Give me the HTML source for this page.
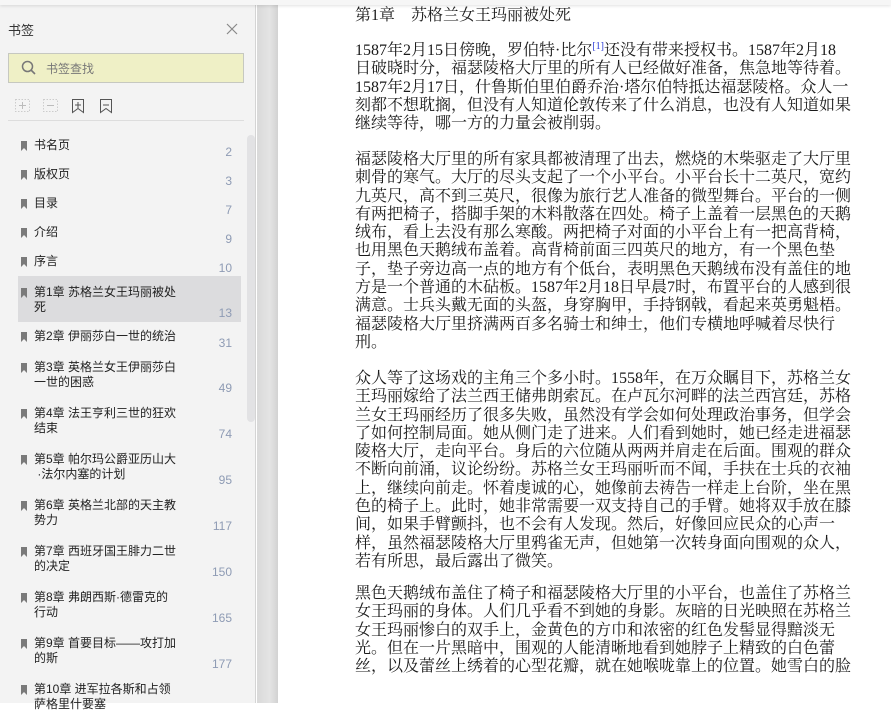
<!DOCTYPE html>
<html><head><meta charset="utf-8"><style>
*{margin:0;padding:0;box-sizing:border-box}
body{width:891px;height:703px;overflow:hidden;background:#fff;position:relative;font-family:"Liberation Sans","Noto Sans CJK SC",sans-serif}
#side{position:absolute;left:0;top:0;width:256px;height:703px;background:#f3f3f3;border-right:1px solid #d4d4d4}
#gap{position:absolute;left:257px;top:0;width:21px;height:703px;background:linear-gradient(90deg,#d9d9d9,#e4e4e4 60%,#d2d2d2)}
#topbar{position:absolute;left:0;top:0;width:891px;height:5px;background:#f6f6f6;box-shadow:0 1px 3px rgba(0,0,0,.12);z-index:5}
.it{position:absolute;left:18px;width:223px;font-size:12px;color:#222;line-height:15px}
.it .t{position:absolute;left:16px;top:0;width:170px;white-space:nowrap}
.it .n{position:absolute;right:9px;color:#8e9bb4;font-size:12px}
.bm{position:absolute;left:3px;top:3px;width:6px;height:10px;background:#7a7a7a;clip-path:polygon(0 0,100% 0,100% 100%,50% 70%,0 100%)}
#page{position:absolute;left:355px;top:0;font-family:"Liberation Serif","Noto Serif CJK SC",serif;font-size:16px;color:#1a1a1a;line-height:18.3px;white-space:nowrap}
.p{position:absolute;left:0}
sup{font-size:10px;color:#2b3bd6;vertical-align:6px;line-height:0}
</style></head><body>
<div id="topbar"></div>
<div id="side">
 <div style="position:absolute;left:8px;top:20px;font-size:13px;color:#333">书签</div>
 <svg style="position:absolute;left:226px;top:23px" width="12" height="12"><path d="M1 1L11 11M11 1L1 11" stroke="#888" stroke-width="1.2"/></svg>
 <div style="position:absolute;left:8px;top:53px;width:236px;height:30px;background:#eff0c6;border:1px solid #c6c8c0"></div>
 <svg style="position:absolute;left:21px;top:60px" width="16" height="16"><circle cx="6.5" cy="6.5" r="5" fill="none" stroke="#777" stroke-width="1.5"/><path d="M10 10L14 14" stroke="#777" stroke-width="1.6"/></svg>
 <div style="position:absolute;left:46px;top:60px;font-size:12px;color:#777">书签查找</div>
 <svg style="position:absolute;left:14px;top:98px" width="110" height="16">
  <rect x="1.5" y="1.5" width="14" height="12" fill="none" stroke="#ccc" stroke-dasharray="1.5 1.5"/><path d="M8.5 4v7M5 7.5h7" stroke="#bbb"/>
  <rect x="29.5" y="1.5" width="14" height="12" fill="none" stroke="#ccc" stroke-dasharray="1.5 1.5"/><path d="M33 7.5h7" stroke="#bbb"/>
  <path d="M58.5 1.5h11v13l-5.5-4-5.5 4z" fill="none" stroke="#555"/><path d="M64 4v6M61 7h6" stroke="#555"/>
  <path d="M86.5 1.5h11v13l-5.5-4-5.5 4z" fill="none" stroke="#555"/><path d="M89 7h6" stroke="#555"/>
 </svg>
 <div style="position:absolute;left:8px;top:120px;width:236px;height:1px;background:#ddd"></div>
 <div style="position:absolute;left:247px;top:135px;width:8px;height:287px;background:#e2e2e4;border-radius:4px"></div>
 <div style="position:absolute;left:18px;top:276px;width:223px;height:46px;background:#dcdcde"></div>

 <div class="it" style="top:138px"><div class="bm"></div><div class="t">书名页</div><div class="n" style="top:7px">2</div></div>
 <div class="it" style="top:167px"><div class="bm"></div><div class="t">版权页</div><div class="n" style="top:7px">3</div></div>
 <div class="it" style="top:196px"><div class="bm"></div><div class="t">目录</div><div class="n" style="top:7px">7</div></div>
 <div class="it" style="top:225px"><div class="bm"></div><div class="t">介绍</div><div class="n" style="top:7px">9</div></div>
 <div class="it" style="top:254px"><div class="bm"></div><div class="t">序言</div><div class="n" style="top:7px">10</div></div>
 <div class="it" style="top:285px"><div class="bm"></div><div class="t">第1章 苏格兰女王玛丽被处<br>死</div><div class="n" style="top:21px">13</div></div>
 <div class="it" style="top:329px"><div class="bm"></div><div class="t">第2章 伊丽莎白一世的统治</div><div class="n" style="top:7px">31</div></div>
 <div class="it" style="top:360px"><div class="bm"></div><div class="t">第3章 英格兰女王伊丽莎白<br>一世的困惑</div><div class="n" style="top:21px">49</div></div>
 <div class="it" style="top:406px"><div class="bm"></div><div class="t">第4章 法王亨利三世的狂欢<br>结束</div><div class="n" style="top:21px">74</div></div>
 <div class="it" style="top:452px"><div class="bm"></div><div class="t">第5章 帕尔玛公爵亚历山大<br>&nbsp;·法尔内塞的计划</div><div class="n" style="top:21px">95</div></div>
 <div class="it" style="top:498px"><div class="bm"></div><div class="t">第6章 英格兰北部的天主教<br>势力</div><div class="n" style="top:21px">117</div></div>
 <div class="it" style="top:544px"><div class="bm"></div><div class="t">第7章 西班牙国王腓力二世<br>的决定</div><div class="n" style="top:21px">150</div></div>
 <div class="it" style="top:590px"><div class="bm"></div><div class="t">第8章 弗朗西斯·德雷克的<br>行动</div><div class="n" style="top:21px">165</div></div>
 <div class="it" style="top:636px"><div class="bm"></div><div class="t">第9章 首要目标——攻打加<br>的斯</div><div class="n" style="top:21px">177</div></div>
 <div class="it" style="top:682px"><div class="bm"></div><div class="t">第10章 进军拉各斯和占领<br>萨格里什要塞</div></div>
</div>
<div id="gap"></div>
<div id="page">
<div class="p" style="top:7px">第1章　苏格兰女王玛丽被处死</div>
<div class="p" style="top:42px">1587年2月15日傍晚，罗伯特·比尔<sup>[1]</sup>还没有带来授权书。1587年2月18<br>日破晓时分，福瑟陵格大厅里的所有人已经做好准备，焦急地等待着。<br>1587年2月17日，什鲁斯伯里伯爵乔治·塔尔伯特抵达福瑟陵格。众人一<br>刻都不想耽搁，但没有人知道伦敦传来了什么消息，也没有人知道如果<br>继续等待，哪一方的力量会被削弱。</div>
<div class="p" style="top:151px">福瑟陵格大厅里的所有家具都被清理了出去，燃烧的木柴驱走了大厅里<br>刺骨的寒气。大厅的尽头支起了一个小平台。小平台长十二英尺，宽约<br>九英尺，高不到三英尺，很像为旅行艺人准备的微型舞台。平台的一侧<br>有两把椅子，搭脚手架的木料散落在四处。椅子上盖着一层黑色的天鹅<br>绒布，看上去没有那么寒酸。两把椅子对面的小平台上有一把高背椅，<br>也用黑色天鹅绒布盖着。高背椅前面三四英尺的地方，有一个黑色垫<br>子，垫子旁边高一点的地方有个低台，表明黑色天鹅绒布没有盖住的地<br>方是一个普通的木砧板。1587年2月18日早晨7时，布置平台的人感到很<br>满意。士兵头戴无面的头盔，身穿胸甲，手持钢戟，看起来英勇魁梧。<br>福瑟陵格大厅里挤满两百多名骑士和绅士，他们专横地呼喊着尽快行<br>刑。</div>
<div class="p" style="top:370px">众人等了这场戏的主角三个多小时。1558年，在万众瞩目下，苏格兰女<br>王玛丽嫁给了法兰西王储弗朗索瓦。在卢瓦尔河畔的法兰西宫廷，苏格<br>兰女王玛丽经历了很多失败，虽然没有学会如何处理政治事务，但学会<br>了如何控制局面。她从侧门走了进来。人们看到她时，她已经走进福瑟<br>陵格大厅，走向平台。身后的六位随从两两并肩走在后面。围观的群众<br>不断向前涌，议论纷纷。苏格兰女王玛丽听而不闻，手扶在士兵的衣袖<br>上，继续向前走。怀着虔诚的心，她像前去祷告一样走上台阶，坐在黑<br>色的椅子上。此时，她非常需要一双支持自己的手臂。她将双手放在膝<br>间，如果手臂颤抖，也不会有人发现。然后，好像回应民众的心声一<br>样，虽然福瑟陵格大厅里鸦雀无声，但她第一次转身面向围观的众人，<br>若有所思，最后露出了微笑。</div>
<div class="p" style="top:585px">黑色天鹅绒布盖住了椅子和福瑟陵格大厅里的小平台，也盖住了苏格兰<br>女王玛丽的身体。人们几乎看不到她的身影。灰暗的日光映照在苏格兰<br>女王玛丽惨白的双手上，金黄色的方巾和浓密的红色发髻显得黯淡无<br>光。但在一片黑暗中，围观的人能清晰地看到她脖子上精致的白色蕾<br>丝，以及蕾丝上绣着的心型花瓣，就在她喉咙靠上的位置。她雪白的脸</div>
</div>
</body></html>
